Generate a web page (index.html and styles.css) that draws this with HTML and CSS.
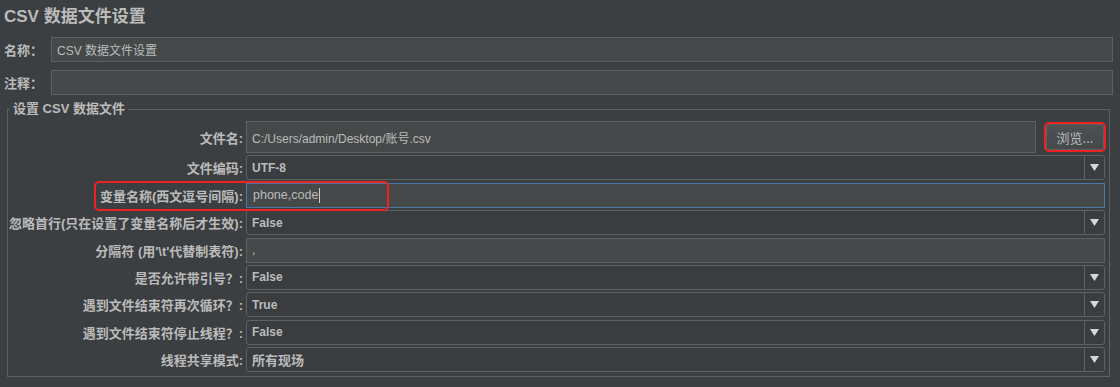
FILE: index.html
```html
<!DOCTYPE html>
<html lang="zh-CN">
<head>
  <meta charset="UTF-8">
  <title>CSV 数据文件设置</title>
  <link rel="stylesheet" href="styles.css">
</head>
<body>

  <h1 class="title">CSV 数据文件设置</h1>

  <div class="meta">
    <label class="meta-label">名称：</label>
    <div class="field text">CSV 数据文件设置</div>
    <label class="meta-label">注释：</label>
    <div class="field text"></div>
  </div>

  <fieldset class="group">
    <legend>设置 CSV 数据文件</legend>
    <div class="form">
      <label class="lbl">文件名:</label>
      <div class="file-row">
        <div class="field text path">C:/Users/admin/Desktop/账号.csv</div>
        <button class="browse">浏览...</button>
      </div>

      <label class="lbl">文件编码:</label>
      <div class="field combo"><span class="value">UTF-8</span><span class="arrow"><svg width="9" height="7" viewBox="0 0 9 7"><polygon points="0,0 9,0 4.5,7" fill="#d8d8d8"/></svg></span></div>

      <label class="lbl">变量名称(西文逗号间隔):</label>
      <div class="field text focus">phone,code<span class="caret"></span></div>

      <label class="lbl">忽略首行(只在设置了变量名称后才生效):</label>
      <div class="field combo"><span class="value">False</span><span class="arrow"><svg width="9" height="7" viewBox="0 0 9 7"><polygon points="0,0 9,0 4.5,7" fill="#d8d8d8"/></svg></span></div>

      <label class="lbl">分隔符 (用'\t'代替制表符):</label>
      <div class="field text">,</div>

      <label class="lbl">是否允许带引号？:</label>
      <div class="field combo"><span class="value">False</span><span class="arrow"><svg width="9" height="7" viewBox="0 0 9 7"><polygon points="0,0 9,0 4.5,7" fill="#d8d8d8"/></svg></span></div>

      <label class="lbl">遇到文件结束符再次循环？:</label>
      <div class="field combo"><span class="value">True</span><span class="arrow"><svg width="9" height="7" viewBox="0 0 9 7"><polygon points="0,0 9,0 4.5,7" fill="#d8d8d8"/></svg></span></div>

      <label class="lbl">遇到文件结束符停止线程？:</label>
      <div class="field combo"><span class="value">False</span><span class="arrow"><svg width="9" height="7" viewBox="0 0 9 7"><polygon points="0,0 9,0 4.5,7" fill="#d8d8d8"/></svg></span></div>

      <label class="lbl">线程共享模式:</label>
      <div class="field combo"><span class="value cjk">所有现场</span><span class="arrow"><svg width="9" height="7" viewBox="0 0 9 7"><polygon points="0,0 9,0 4.5,7" fill="#d8d8d8"/></svg></span></div>

      <div class="mark"></div>
    </div>
  </fieldset>

</body>
</html>
```

FILE: styles.css
```css
:root {
  --bg: #3c3f41;
  --field-bg: #45494a;
  --combo-bg: #3a3d3f;
  --border: #5e6163;
  --text: #bbbbbb;
  --focus: #4a78a6;
  --mark: #ee2222;
}

body {
  margin: 0;
  background: var(--bg);
  color: var(--text);
  font-family: "Liberation Sans", "Noto Sans CJK SC", sans-serif;
  font-size: 13px;
  width: 1120px;
  height: 387px;
  overflow: hidden;
}

.title {
  margin: 0;
  padding: 6px 0 0 4px;
  height: 31px;
  box-sizing: border-box;
  font-size: 17px;
  line-height: 22px;
  font-weight: bold;
}

.meta {
  display: grid;
  grid-template-columns: 47px 1fr;
  grid-auto-rows: 25px;
  row-gap: 8px;
  padding: 6px 7px 0 4px;
}

.meta-label {
  font-weight: bold;
  display: flex;
  align-items: center;
}

.field {
  box-sizing: border-box;
  height: 25px;
  display: flex;
  align-items: center;
  font-size: 12px;
}

.text {
  background: var(--field-bg);
  border: 1px solid var(--border);
  padding-left: 5px;
}

.group {
  margin: 6px 10px 0 7px;
  padding: 4px 4px 4px 0;
  border: 1px solid var(--border);
  min-width: 0;
}

.group legend {
  margin-left: 2px;
  padding: 0 3px;
  font-weight: bold;
  line-height: 16px;
}

.form {
  position: relative;
  display: grid;
  grid-template-columns: 238px 1fr;
  grid-template-rows: 32px;
  grid-auto-rows: 25px;
  row-gap: 2.4px;
}

.lbl {
  font-weight: bold;
  text-align: right;
  padding-right: 3px;
  display: flex;
  align-items: center;
  justify-content: flex-end;
  white-space: nowrap;
}

.file-row {
  display: flex;
  align-items: center;
  gap: 10px;
}

.path {
  flex: 1;
  height: 32px;
}

.browse {
  position: relative;
  width: 58px;
  height: 26px;
  margin-right: 1px;
  background: linear-gradient(#4d5153, #45494b);
  border: 1px solid var(--border);
  border-radius: 3px;
  color: var(--text);
  font-family: "Noto Sans CJK SC", sans-serif;
  font-size: 13px;
  padding: 0;
}

.browse::after {
  content: "";
  position: absolute;
  inset: -3px;
  border: 2px solid var(--mark);
  border-radius: 5px;
}

.combo {
  background: var(--combo-bg);
  border: 1px solid var(--border);
  border-radius: 3px;
}

.combo .value {
  flex: 1;
  padding-left: 5px;
  font-weight: bold;
}

.combo .value.cjk {
  font-size: 13px;
}

.combo .arrow {
  width: 19px;
  height: 100%;
  border-left: 1px solid var(--border);
  display: flex;
  align-items: center;
  justify-content: center;
}

.focus {
  border-color: var(--focus);
  padding-left: 6px;
  font-size: 12.5px;
}

.caret {
  display: inline-block;
  width: 1px;
  height: 15px;
  margin-left: 1px;
  background: #cccccc;
}

.mark {
  position: absolute;
  left: 86px;
  top: 60px;
  width: 295px;
  height: 30px;
  box-sizing: border-box;
  border: 2px solid var(--mark);
  border-radius: 5px;
  pointer-events: none;
}
```
